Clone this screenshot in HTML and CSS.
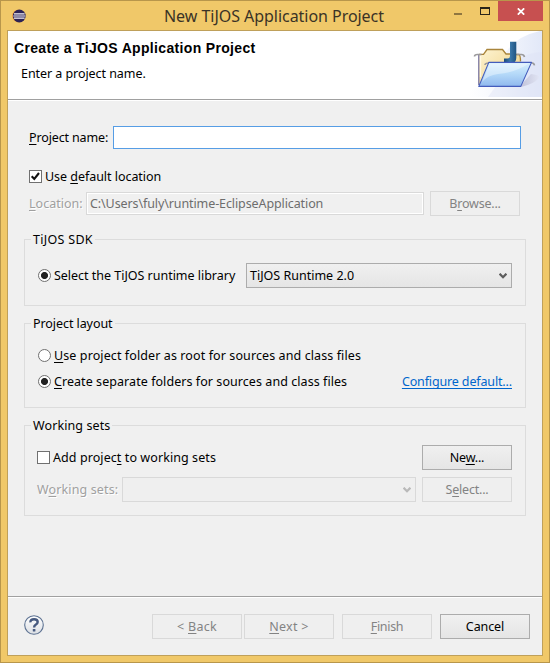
FILE: index.html
```
<!DOCTYPE html>
<html lang="en">
<head>
<meta charset="utf-8">
<title>New TiJOS Application Project</title>
<link rel="stylesheet" href="styles.css">
</head>
<body>
<div class="window">
  <header class="titlebar">
    <svg class="app-icon" width="14" height="14" viewBox="0 0 14 14">
      <circle cx="6.4" cy="7" r="6.2" fill="#ee9a3c"/>
      <circle cx="7.3" cy="7" r="6.4" fill="#2c2255"/>
      <path d="M2 4.9h10.6M1.3 7h12M2 9.1h10.6" stroke="#f4f2fa" stroke-width="1.1"/>
    </svg>
    <h1 class="title">New TiJOS Application Project</h1>
    <div class="controls">
      <span class="minimize"></span>
      <span class="maximize"></span>
      <span class="close">
        <svg width="8" height="7" viewBox="0 0 8 7"><path d="M.8.3 7.2 6.7M7.2.3.8 6.7" stroke="#fff" stroke-width="1.7"/></svg>
      </span>
    </div>
  </header>
  <main class="dialog">
    <section class="banner">
      <div class="banner-text">
        <h2 class="banner-title">Create a TiJOS Application Project</h2>
        <p class="banner-hint">Enter a project name.</p>
      </div>
      <svg class="banner-icon" width="74" height="66" viewBox="0 0 74 66">
        <defs>
          <linearGradient id="bg" x1="0" y1="0" x2="1" y2="0"><stop offset="0" stop-color="#fff"/><stop offset=".4" stop-color="#f6f8fd"/><stop offset="1" stop-color="#e2e8f8"/></linearGradient>
          <linearGradient id="back" x1="0" y1="0" x2="1" y2="1"><stop offset="0" stop-color="#fdf4d4"/><stop offset="1" stop-color="#efcf7c"/></linearGradient>
          <linearGradient id="front" x1="0" y1="0" x2="0" y2="1"><stop offset="0" stop-color="#d9f0fe"/><stop offset=".5" stop-color="#b3d8f8"/><stop offset="1" stop-color="#8fb8ee"/></linearGradient>
          <linearGradient id="jay" x1="0" y1="0" x2="1" y2="0"><stop offset="0" stop-color="#1b4a75"/><stop offset=".5" stop-color="#3a78aa"/><stop offset="1" stop-color="#1f5482"/></linearGradient>
          <linearGradient id="shade" x1="0" y1="0" x2="1" y2="0"><stop offset="0" stop-color="#aaa9c4"/><stop offset="1" stop-color="#e2e5f3"/></linearGradient>
        </defs>
        <path d="M0 66V60Q24 54 34 28Q44 6 72 0H74V66Z" fill="url(#bg)"/>
        <path d="M42 36Q54 22 74 21V66H20Z" fill="#dbe1f5" opacity=".4"/>
        <path d="M53 54 63 43Q73 44 71 47Q66 53 53 56Z" fill="url(#shade)" opacity=".6"/>
        <path d="M11 54V23h4l3.500-4.500h16.500l3.500 4.500h13.500v20z" fill="url(#back)"/>
        <path d="M11 23.300h4.500l3.500-4.800h15.500l3.500 4.500h5M48 23.500h3q1.500 1 1.500 7" fill="none" stroke="#a9853c" stroke-width="1.300"/>
        <path d="M10.800 54V23" stroke="#6e6a96" stroke-width="1.200"/>
        <path d="M12.500 46V25" stroke="#fff8e4" stroke-width="1.200"/>
        <path d="M6.500 25.500q0-2 3-2h4M48.500 23.500h5q2.500 0 3 2.500M17 34q0-2 4-2M63 31.800q3 0 3.500 2.500" fill="none" stroke="#9b9a9c" stroke-width="1.600"/>
        <path d="M42 10.800h6.300v16q0 5.200-5 5.200h-7.300v-4.500h3.500q2.500 0 2.500-2.500z" fill="url(#jay)"/>
        <path d="M20.800 31.400H63.500L52.800 55.400H10.800Z" fill="url(#front)" stroke="#435cbc" stroke-width="1.100" stroke-linejoin="round"/>
        <path d="M21.700 32.500H61Q46 42 30 43Q20 44 14 51Z" fill="#fff" opacity=".38"/>
      </svg>
    </section>

    <form class="form">
      <div class="row name-row">
        <span class="label name-label"><u>P</u>roject name:</span>
        <span class="name-input"></span>
      </div>
      <div class="row default-row">
        <span class="checkbox"><svg width="11" height="11" viewBox="0 0 11 11"><path d="M1.700 5.200 4.300 8 9 2" fill="none" stroke="#111" stroke-width="2.100"/></svg></span>
        <span class="default-label">Use <u>d</u>efault location</span>
      </div>
      <div class="row location-row">
        <span class="label etched location-label"><u>L</u>ocation:</span>
        <span class="location-field">C:\Users\fuly\runtime-EclipseApplication</span>
        <span class="button disabled tight"><span>B<u>r</u>owse...</span></span>
      </div>

      <section class="group sdk">
        <span class="legend sdk-legend">TiJOS SDK</span>
        <div class="row">
          <span class="radio on"></span>
          <span class="sdk-label">Select the TiJOS runtime library</span>
          <span class="combo sdk-combo">TiJOS Runtime 2.0
            <svg class="chevron" width="8" height="6" viewBox="0 0 8 6"><path d="M.6.700 4 4.200 7.400.700" fill="none" stroke="#5c5c5c" stroke-width="2.200"/></svg>
          </span>
        </div>
      </section>

      <section class="group layout">
        <span class="legend layout-legend">Project layout</span>
        <div class="row">
          <span class="radio"></span>
          <span class="root-label"><u>U</u>se project folder as root for sources and class files</span>
        </div>
        <div class="row separate-row">
          <span class="radio on"></span>
          <span class="separate-label"><u>C</u>reate separate folders for sources and class files</span>
          <a class="link">Configure default...</a>
        </div>
      </section>

      <section class="group sets">
        <span class="legend sets-legend">Working sets</span>
        <div class="row">
          <span class="checkbox"></span>
          <span class="add-label">Add projec<u>t</u> to working sets</span>
          <span class="button end tight"><span>Ne<u>w</u>...</span></span>
        </div>
        <div class="row sets-row">
          <span class="label etched sets-label">W<u>o</u>rking sets:</span>
          <span class="combo disabled sets-combo">
            <svg class="chevron" width="8" height="6" viewBox="0 0 8 6"><path d="M.6.700 4 4.200 7.400.700" fill="none" stroke="#b9b9b9" stroke-width="2.200"/></svg>
          </span>
          <span class="button disabled end tight"><span>S<u>e</u>lect...</span></span>
        </div>
      </section>
    </form>

    <footer class="footer">
      <svg class="help" width="20" height="20" viewBox="0 0 20 20">
        <defs><linearGradient id="hg" x1="0" y1="0" x2="0" y2="1"><stop offset="0" stop-color="#fff"/><stop offset="1" stop-color="#dcdfe4"/></linearGradient></defs>
        <circle cx="10" cy="10" r="9.300" fill="url(#hg)" stroke="#5d7292" stroke-width="1.100"/>
        <path d="M6.400 7.400Q6.300 4.200 10 4.200Q13.700 4.200 13.700 7Q13.700 8.600 11.700 9.700Q10.100 10.600 10.100 12.400" fill="none" stroke="#46597f" stroke-width="2.400"/>
        <rect x="8.800" y="14" width="2.600" height="2.600" rx=".6" fill="#46597f"/>
      </svg>
      <div class="actions">
        <span class="button disabled wide"><span>&lt; <u>B</u>ack</span></span>
        <span class="button disabled wide"><span><u>N</u>ext &gt;</span></span>
        <span class="button disabled finish"><span><u>F</u>inish</span></span>
        <span class="button cancel"><span>Cancel</span></span>
      </div>
    </footer>
  </main>
</div>
</body>
</html>
```
FILE: styles.css
```
* { box-sizing: border-box; }
body { margin: 0; font: 12.5px/17px "Noto Sans", "Open Sans", sans-serif; color: #000; }
u { text-decoration: underline; text-decoration-thickness: 1px; text-underline-offset: 2px; text-decoration-skip-ink: none; }
svg { display: block; flex: none; }

.window { width: 550px; height: 663px; display: flex; flex-direction: column; padding: 0 6px 6px; background: #f0c869; border: 1px solid #b8964b; }
.titlebar { flex: none; height: 29px; display: flex; align-items: flex-start; }
.app-icon { margin: 8px 0 0 5px; }
.title { margin: 3px 0 0 138px; font-size: 16px; line-height: 24px; font-weight: 400; letter-spacing: -.04px; color: #3a3326; white-space: nowrap; }
.controls { margin-left: auto; display: flex; align-items: flex-start; }
.minimize { width: 8px; height: 2px; margin: 12px 18px 0 0; background: #8f7640; }
.maximize { width: 10px; height: 8px; margin: 6px 8px 0 0; border: 1px solid #2a2519; border-top-width: 2px; }
.close { width: 45px; height: 20px; display: flex; align-items: center; justify-content: center; background: #c75050; }

.dialog { flex: 1; display: flex; flex-direction: column; border: 1px solid #bfa05a; background: #f0f0f0; }
.banner { flex: none; height: 70px; display: flex; justify-content: space-between; background: #fff; border-bottom: 1px solid #fff; box-shadow: inset 0 -1px #a0a0a0; }
.banner-text { padding-left: 6px; }
.banner-title { margin: 8px 0 0; font: bold 14px/18px "Liberation Sans", Arial, sans-serif; letter-spacing: .33px; white-space: nowrap; }
.banner-hint { margin: 8px 0 0 7px; letter-spacing: -.06px; }

.form { flex: 1; padding: 25px 16px 0; }
.row { display: flex; align-items: center; white-space: nowrap; }
.label { flex: none; }
.etched { color: #a0a0a0; text-shadow: 1px 1px #fff; }
.name-row { height: 23px; padding-left: 5px; }
.name-label { width: 84px; letter-spacing: -.14px; }
.name-input { width: 408px; height: 23px; background: #fff; border: 1px solid #569de5; }
.default-row { height: 13px; margin-top: 21px; padding-left: 5px; }
.default-label { margin-left: 3px; letter-spacing: -.04px; }
.location-row { height: 25px; margin-top: 8px; padding-left: 5px; }
.location-label { width: 57px; }
.location-field { width: 338px; height: 23px; padding: 1px 3px; border: 1px solid #d9d9d9; box-shadow: inset 0 0 0 1px #fff; color: #6d6d6d; line-height: 19px; letter-spacing: -.1px; margin-right: 6px; }

.checkbox { flex: none; width: 13px; height: 13px; background: #fff; border: 1px solid #707070; }
.radio { flex: none; width: 13px; height: 13px; border-radius: 50%; background: #fff; border: 1px solid #707070; }
.radio.on { background: radial-gradient(circle, #222 3.1px, #fff 3.9px); }
.radio + span { margin-left: 3px; }

.button { flex: none; width: 90px; height: 25px; display: flex; align-items: center; justify-content: center; border: 1px solid #acacac; background: linear-gradient(#f0f0f0, #e5e5e5); }
.button.disabled { border-color: #d9d9d9; background: #efefef; color: #838383; }
.button.tight { letter-spacing: -.2px; }
.button.wide { letter-spacing: .27px; }
.button.end { margin-left: auto; }
.combo { flex: none; height: 25px; display: flex; align-items: center; justify-content: space-between; border: 1px solid #acacac; background: linear-gradient(#f0f0f0, #e5e5e5); padding: 0 4px 0 3px; }
.combo.disabled { border-color: #d9d9d9; background: #efefef; }
.chevron { margin-left: auto; }

.group { position: relative; width: 502px; border: 1px solid #dcdcdc; }
.legend { position: absolute; left: 6px; top: -9px; padding: 0 2px; background: #f0f0f0; white-space: nowrap; }
.sdk { height: 67px; margin-top: 23px; padding: 23px 13px 0; }
.sdk-legend { letter-spacing: .3px; }
.sdk-label { width: 192px; letter-spacing: -.02px; }
.sdk-combo { width: 266px; }
.layout { height: 85px; margin-top: 17px; padding: 23px 13px 0; }
.layout-legend { letter-spacing: -.07px; }
.root-label { letter-spacing: .1px; }
.separate-row { margin-top: 9px; }
.separate-label { letter-spacing: .06px; }
.link { margin-left: auto; color: #0066cc; text-decoration: underline; text-underline-offset: 2px; text-decoration-skip-ink: none; letter-spacing: -.14px; }
.sets { height: 91px; margin-top: 17px; padding: 19px 13px 0 12px; }
.sets-legend { letter-spacing: .1px; }
.add-label { margin-left: 3px; letter-spacing: .08px; }
.sets-row { margin-top: 7px; }
.sets-label { width: 85px; letter-spacing: .13px; }
.sets-combo { width: 294px; }

.footer { flex: none; height: 59px; display: flex; align-items: flex-start; justify-content: space-between; padding: 17px 12px 0 16px; border-top: 1px solid #a0a0a0; box-shadow: inset 0 1px #fff; }
.help { margin-top: 1px; }
.actions { display: flex; }
.wide + .wide { margin-left: 2px; }
.finish { margin-left: 8px; letter-spacing: -.3px; }
.cancel { margin-left: 8px; letter-spacing: -.1px; }
```
